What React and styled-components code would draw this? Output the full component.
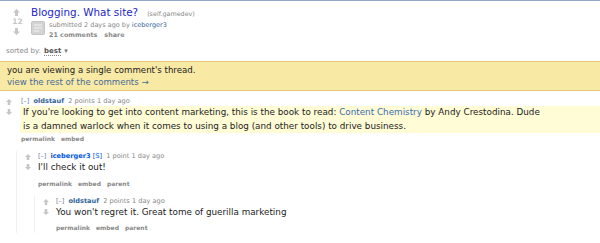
import React from "react";
import styled, { createGlobalStyle } from "styled-components";

const Global = createGlobalStyle`
  html, body { margin: 0; padding: 0; background: #fff; }
  body { font-family: "DejaVu Sans", Verdana, sans-serif; color: #222; }
`;

const Page = styled.div`
  border-top: 1px solid #93a9c9;
  width: 600px;
  height: 242px;
  overflow: hidden;
`;

const PostRow = styled.div`
  display: flex;
  padding: 5px 0 0 10px;
`;

const VoteCol = styled.div`
  width: 12px;
  display: flex;
  flex-direction: column;
  align-items: center;
  padding-top: 3px;
`;

const Score = styled.div`
  font-size: 7.4px;
  line-height: 12px;
  color: #c6c6c6;
  font-weight: bold;
  margin-left: 3px;
`;

const PostEntry = styled.div`
  margin-left: 9px;
  display: flex;
  flex-direction: column;
`;

const TitleLine = styled.div`
  display: flex;
  align-items: baseline;
  line-height: 13px;
`;

const Title = styled.a`
  font-size: 10.4px;
  color: #2424cc;
  text-decoration: none;
`;

const Domain = styled.span`
  font-size: 6.4px;
  color: #888;
  margin-left: 9px;
`;

const SubRow = styled.div`
  display: flex;
  align-items: flex-start;
`;

const Meta = styled.div`
  margin-left: 4px;
  display: flex;
  flex-direction: column;
  margin-top: -1px;
`;

const Tagline = styled.div`
  font-size: ${(p) => p.$size || 6.6}px;
  line-height: 10px;
  color: #888;
  white-space: nowrap;
`;

const Author = styled.a`
  color: ${(p) => (p.$op ? "#0055df" : "#369")};
  font-weight: ${(p) => (p.$bold ? "bold" : "normal")};
  text-decoration: none;
`;

const Expand = styled.span`
  color: #6d80a3;
  margin-right: 4px;
`;

const Buttons = styled.div`
  display: flex;
  gap: ${(p) => p.$gap || 6}px;
  font-size: ${(p) => p.$size || 6}px;
  line-height: 10px;
  font-weight: bold;
  color: #888;
  margin-top: ${(p) => p.$mt || 0}px;
`;

const SortBar = styled.div`
  margin: 6px 0 0 6px;
  font-size: 7px;
  line-height: 10px;
  color: #888;
  display: flex;
  align-items: center;
  gap: 3px;
`;

const SortValue = styled.span`
  color: #555;
  font-weight: bold;
  border-bottom: 1px dotted #888;
  line-height: 8px;
`;

const SortCaret = styled.span`
  font-size: 7px;
  color: #777;
`;

const InfoBar = styled.div`
  margin-top: 5px;
  background: #f8e9a4;
  border-top: 1px solid #e6c972;
  border-bottom: 1px solid #e6c972;
  padding: 3px 7px 2px;
  font-size: 8.6px;
  line-height: 11.5px;
  color: #222;
`;

const InfoLink = styled.a`
  color: #46699a;
  text-decoration: none;
  display: block;
`;

const Comments = styled.div`
  margin-top: 5px;
  padding-left: 6px;
`;

const CommentBlock = styled.div`
  display: flex;
  flex-direction: column;
`;

const CommentRow = styled.div`
  display: flex;
`;

const Midcol = styled.div`
  width: ${(p) => (p.$nested ? 13 : 15)}px;
  flex-shrink: 0;
  display: flex;
  flex-direction: column;
  gap: 4px;
  padding-top: 3px;
`;

const Entry = styled.div`
  flex: 1;
  min-width: 0;
`;

const Body = styled.div`
  font-size: 8.8px;
  line-height: 13.5px;
  color: #222;
  ${(p) =>
    p.$highlight
      ? `background: #fffcd6; padding: 0 0 0 3px; margin-left: -1px;`
      : ``}
`;

const BodyText = styled.div`
  max-width: 518px;
`;

const BodyLink = styled.a`
  color: #3a6bb0;
  text-decoration: none;
`;

const Children = styled.div`
  margin: ${(p) => p.$mt || 6}px 0 0 ${(p) => p.$ml || 10}px;
  padding-left: 8px;
  border-left: 1px solid #f1f1f1;
`;

const Thumb = styled.svg`
  display: block;
  flex-shrink: 0;
`;

function Arrow({ dir = "up", size = 6 }) {
  const d =
    dir === "up"
      ? "M3.5 0 L7 3.6 L5 3.6 L5 7 L2 7 L2 3.6 L0 3.6 Z"
      : "M3.5 7 L7 3.4 L5 3.4 L5 0 L2 0 L2 3.4 L0 3.4 Z";
  return (
    <svg width={size} height={size} viewBox="0 0 7 7" style={{ display: "block" }}>
      <path d={d} fill="#c6c6c6" />
    </svg>
  );
}

function SelfThumb() {
  return (
    <Thumb width="14" height="14" viewBox="0 0 14 14">
      <rect x="0.5" y="0.5" width="13" height="13" rx="1" fill="#d4d4d4" stroke="#c4c4c4" />
      <rect x="3" y="3.5" width="8" height="1" fill="#f2f2f2" />
      <rect x="3" y="6.5" width="8" height="1" fill="#f2f2f2" />
      <rect x="3" y="9.5" width="5" height="1" fill="#f2f2f2" />
    </Thumb>
  );
}

function Comment({ author, op, points, body, highlight, buttons, nested, children, childIndent, childTop }) {
  return (
    <CommentBlock>
      <CommentRow>
        <Midcol $nested={nested}>
          <Arrow dir="up" />
          <Arrow dir="down" />
        </Midcol>
        <Entry>
          <Tagline>
            <Expand>[–]</Expand>
            <Author $bold $op={op}>{author}</Author>
            {op && <Author $op> [S]</Author>}
            &nbsp;&nbsp;{points} 1 day ago
          </Tagline>
          <Body $highlight={highlight}>
            <BodyText>{body}</BodyText>
          </Body>
          <Buttons $mt={highlight ? 1 : 4}>
            {buttons.map((b) => (
              <span key={b}>{b}</span>
            ))}
          </Buttons>
        </Entry>
      </CommentRow>
      {children && (
        <Children $ml={childIndent} $mt={childTop}>
          {children}
        </Children>
      )}
    </CommentBlock>
  );
}

export default function App() {
  return (
    <>
      <Global />
      <Page>
        <PostRow>
          <VoteCol>
            <Arrow dir="up" size={7} />
            <Score>12</Score>
            <Arrow dir="down" size={7} />
          </VoteCol>
          <PostEntry>
            <TitleLine>
              <Title>Blogging. What site?</Title>
              <Domain>(self.gamedev)</Domain>
            </TitleLine>
            <SubRow>
              <SelfThumb />
              <Meta>
                <Tagline $size={6.5}>
                  submitted 2 days ago by <Author>iceberger3</Author>
                </Tagline>
                <Buttons $size={6.4} $gap={7}>
                  <span>21 comments</span>
                  <span>share</span>
                </Buttons>
              </Meta>
            </SubRow>
          </PostEntry>
        </PostRow>
        <SortBar>
          sorted by: <SortValue>best</SortValue>
          <SortCaret>▾</SortCaret>
        </SortBar>
        <InfoBar>
          you are viewing a single comment's thread.
          <InfoLink>view the rest of the comments →</InfoLink>
        </InfoBar>
        <Comments>
          <Comment
            author="oldstauf"
            points="2 points"
            highlight
            childIndent={10}
            childTop={7}
            buttons={["permalink", "embed"]}
            body={
              <>
                If you're looking to get into content marketing, this is the book to read:{" "}
                <BodyLink>Content Chemistry</BodyLink> by Andy Crestodina. Dude is a damned warlock when it
                comes to using a blog (and other tools) to drive business.
              </>
            }
          >
            <Comment
              author="iceberger3"
              op
              nested
              points="1 point"
              childIndent={9}
              childTop={7}
              buttons={["permalink", "embed", "parent"]}
              body="I'll check it out!"
            >
              <Comment
                author="oldstauf"
                nested
                points="2 points"
                buttons={["permalink", "embed", "parent"]}
                body="You won't regret it. Great tome of guerilla marketing"
              />
            </Comment>
          </Comment>
        </Comments>
      </Page>
    </>
  );
}
